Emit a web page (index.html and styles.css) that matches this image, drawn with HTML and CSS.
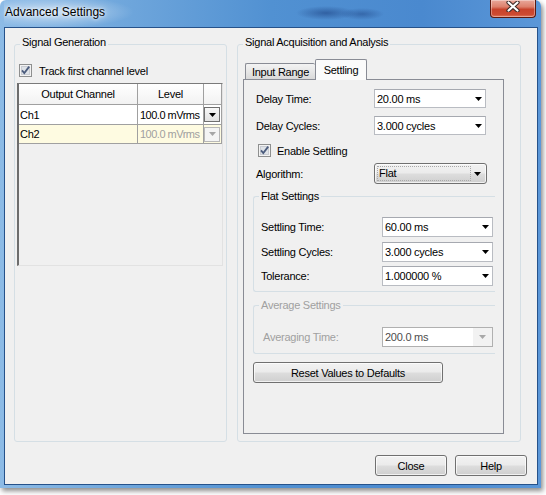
FILE: index.html
```html
<!DOCTYPE html>
<html>
<head>
<meta charset="utf-8">
<title>Advanced Settings</title>
<link rel="stylesheet" href="styles.css">
</head>
<body>
<div class="window">
  <div class="titlebar">
    <span class="title">Advanced Settings</span>
    <span class="close-x">
      <svg width="14" height="11" viewBox="0 0 14 11"><path d="M2.5 1.5 11.5 9.5M11.5 1.5 2.5 9.5" stroke="#3b2a28" stroke-width="4.2" stroke-linecap="round"/><path d="M2.5 1.5 11.5 9.5M11.5 1.5 2.5 9.5" stroke="#fff" stroke-width="2.2" stroke-linecap="round"/></svg>
    </span>
  </div>
  <div class="client">
    <div class="groups">
      <fieldset class="group gen">
        <legend class="glegend">Signal Generation</legend>
        <div class="check gen-check">
          <svg width="13" height="13" viewBox="0 0 13 13"><rect x="0.5" y="0.5" width="12" height="12" fill="#f3f3f3" stroke="#8e8f8f"/><rect x="2.5" y="2.5" width="8" height="8" fill="#dfe3e8" stroke="#c9ccd2"/><path d="M3 6.3 5.3 9 10.2 2.6" fill="none" stroke="#4b5c7d" stroke-width="1.8"/></svg>
          <span>Track first channel level</span>
        </div>
        <div class="chgrid">
          <div class="cell hd">Output Channel</div>
          <div class="cell hd">Level</div>
          <div class="cell hd"></div>
          <div class="cell">Ch1</div>
          <div class="cell lvl">100.0 mVrms</div>
          <div class="cell bc"><span class="gbtn"><svg width="7" height="4" viewBox="0 0 7 4"><path d="M0 0h7L3.5 4z"/></svg></span></div>
          <div class="cell y">Ch2</div>
          <div class="cell y lvl dis">100.0 mVrms</div>
          <div class="cell y bc"><span class="gbtn off"><svg width="7" height="4" viewBox="0 0 7 4"><path d="M0 0h7L3.5 4z" fill="#a6a6a6"/></svg></span></div>
        </div>
      </fieldset>
      <fieldset class="group acq">
        <legend class="glegend">Signal Acquisition and Analysis</legend>
        <div class="tabs">
          <span class="tab t1">Input Range</span>
          <span class="tab on">Settling</span>
        </div>
        <div class="panel">
          <div class="prow">
            <span>Delay Time:</span>
            <div class="combo"><span class="v">20.00 ms</span><svg width="7" height="4" viewBox="0 0 7 4"><path d="M0 0h7L3.5 4z"/></svg></div>
          </div>
          <div class="prow r2">
            <span>Delay Cycles:</span>
            <div class="combo"><span class="v">3.000 cycles</span><svg width="7" height="4" viewBox="0 0 7 4"><path d="M0 0h7L3.5 4z"/></svg></div>
          </div>
          <div class="check pcheck">
            <svg width="13" height="13" viewBox="0 0 13 13"><rect x="0.5" y="0.5" width="12" height="12" fill="#f3f3f3" stroke="#8e8f8f"/><rect x="2.5" y="2.5" width="8" height="8" fill="#dfe3e8" stroke="#c9ccd2"/><path d="M3 6.3 5.3 9 10.2 2.6" fill="none" stroke="#4b5c7d" stroke-width="1.8"/></svg>
            <span>Enable Settling</span>
          </div>
          <div class="prow alg">
            <span>Algorithm:</span>
            <div class="dlist"><span class="focus">Flat</span><svg width="7" height="4" viewBox="0 0 7 4"><path d="M0 0h7L3.5 4z"/></svg></div>
          </div>
          <fieldset class="sub flat">
            <legend class="slegend">Flat Settings</legend>
            <div class="srow s1">
              <span>Settling Time:</span>
              <div class="combo tall"><span class="v">60.00 ms</span><svg width="7" height="4" viewBox="0 0 7 4"><path d="M0 0h7L3.5 4z"/></svg></div>
            </div>
            <div class="srow s2">
              <span>Settling Cycles:</span>
              <div class="combo tall"><span class="v">3.000 cycles</span><svg width="7" height="4" viewBox="0 0 7 4"><path d="M0 0h7L3.5 4z"/></svg></div>
            </div>
            <div class="srow s3">
              <span>Tolerance:</span>
              <div class="combo tall"><span class="v">1.000000 %</span><svg width="7" height="4" viewBox="0 0 7 4"><path d="M0 0h7L3.5 4z"/></svg></div>
            </div>
          </fieldset>
          <fieldset class="sub avg">
            <legend class="slegend off">Average Settings</legend>
            <div class="arow">
              <span class="off">Averaging Time:</span>
              <div class="combo tall dis"><span class="v">200.0 ms</span><span class="dbtn"><svg width="7" height="4" viewBox="0 0 7 4"><path d="M0 0h7L3.5 4z" fill="#a8a8a8"/></svg></span></div>
            </div>
          </fieldset>
          <div class="btn reset">Reset Values to Defaults</div>
        </div>
      </fieldset>
    </div>
    <div class="footer">
      <div class="btn">Close</div>
      <div class="btn">Help</div>
    </div>
  </div>
</div>
</body>
</html>
```
FILE: styles.css
```css
* { box-sizing: border-box; }
html, body { margin: 0; padding: 0; }
body {
  width: 546px;
  height: 495px;
  overflow: hidden;
  background: #ffffff;
  font-family: "Liberation Sans", Arial, sans-serif;
  font-size: 11px;
  letter-spacing: -0.25px;
  color: #000;
}
.window {
  width: 541px;
  height: 488px;
  padding: 0 3px 3px 4px;
  display: flex;
  flex-direction: column;
  background: linear-gradient(to right, #8dbbe6 0%, #70a7dc 22%, #5191d2 50%, #4a89cf 78%, #5b97d8 100%);
  border-radius: 6px 6px 0 0;
  box-shadow: 2px 3px 5px rgba(0, 0, 0, 0.45);
}
.titlebar {
  height: 27px;
  display: flex;
  align-items: flex-start;
  padding-left: 1px;
  background:
    radial-gradient(ellipse 80px 16px at 50px 12px, rgba(255,255,255,0.55), rgba(255,255,255,0)),
    radial-gradient(ellipse 30px 7px at 322px 13px, rgba(25,60,125,0.55), rgba(25,60,125,0)),
    radial-gradient(ellipse 22px 6px at 358px 14px, rgba(25,60,125,0.45), rgba(25,60,125,0));
}
.title {
  margin-top: 5px;
  font-size: 12px;
  line-height: 15px;
  letter-spacing: 0;
  color: #000;
  text-shadow: 0 0 6px #fff, 0 0 3px rgba(255,255,255,0.9);
}
.close-x {
  margin-left: auto;
  margin-right: 2px;
  width: 46px;
  height: 18px;
  display: flex;
  justify-content: center;
  align-items: flex-start;
  padding-top: 1px;
  border: 1px solid #5d1a10;
  border-top: none;
  border-radius: 0 0 4px 4px;
  background: linear-gradient(#e9a89b 0%, #dd806c 40%, #c8432c 55%, #cd4a31 85%, #df785e 100%);
  box-shadow: inset 0 0 0 1px rgba(255,255,255,0.35);
}
.client {
  flex: 1;
  background: #f0f0f0;
  border: 1px solid #26528a;
  padding: 8px 10px 8px 9px;
  display: flex;
  flex-direction: column;
}
.groups {
  display: flex;
  gap: 10px;
  height: 406px;
}
.group {
  margin: 0;
  padding: 0;
  min-width: 0;
  height: 406px;
  border: 1px solid #d5dfe5;
  border-radius: 3px;
}
.glegend {
  margin-left: 5px;
  padding: 0 2px 4px;
  line-height: 13px;
}
.gen { width: 213px; }
.acq { width: 284px; }
.check {
  display: flex;
  align-items: center;
  gap: 7px;
  height: 13px;
}
.check svg { flex: none; }
.gen-check { margin: 11px 0 0 4px; }
.chgrid {
  margin: 6px 0 0 2px;
  width: 206px;
  height: 183px;
  border-style: solid;
  border-width: 1px 1px 1px 2px;
  border-color: #7a7a7a #e2e2e2 #e2e2e2 #6d6d6d;
  display: grid;
  grid-template-columns: 119px 66px 18px;
  grid-template-rows: 21px 20px 19px;
  align-content: start;
}
.cell {
  border-right: 1px solid #a0a0a0;
  border-bottom: 1px solid #a0a0a0;
  background: #fff;
  display: flex;
  align-items: center;
  white-space: nowrap;
  overflow: hidden;
  padding-left: 1px;
}
.cell.hd {
  justify-content: center;
  padding-left: 0;
  background: linear-gradient(#ffffff, #f2f2f2);
}
.cell.y { background: #fefbe1; }
.cell.lvl { padding-left: 2px; letter-spacing: -0.5px; }
.cell.dis { color: #a0a0a0; }
.cell.bc { padding: 0; }
.gbtn {
  width: 16px;
  height: 15px;
  border: 1px solid #6f6f6f;
  background: linear-gradient(#f8f8f8, #e2e2e2);
  display: flex;
  align-items: center;
  justify-content: center;
}
.gbtn.off {
  border-color: #b8b8b8;
  background: #f4f4f4;
}
.tabs {
  display: flex;
  align-items: flex-end;
  height: 20px;
  margin: 6px 0 0 7px;
}
.tab {
  height: 16px;
  border: 1px solid #898c95;
  border-bottom: none;
  border-radius: 2px 2px 0 0;
  background: linear-gradient(#f3f3f3, #e7e7e7 50%, #d9d9d9);
  display: flex;
  align-items: center;
  justify-content: center;
}
.tab.t1 { width: 70px; border-right: none; }
.tab.on {
  width: 52px;
  height: 21px;
  margin-bottom: -1px;
  background: #fbfbfb;
  position: relative;
  z-index: 1;
  padding-bottom: 1px;
}
.panel {
  margin-left: 5px;
  width: 261px;
  height: 355px;
  border: 1px solid #898c95;
  background: #f0f0f0;
  padding-top: 9px;
}
.prow {
  display: grid;
  grid-template-columns: 118px 113px;
  align-items: center;
  margin-left: 12px;
}
.prow.r2 { margin-top: 8px; }
.prow.alg { margin-top: 6px; }
.combo {
  width: 112px;
  height: 19px;
  display: flex;
  align-items: center;
  background: #fff;
  border: 1px solid #b9bcc2;
  border-top-color: #a6a9b0;
  padding-left: 2px;
}
.combo.tall { width: 111px; height: 20px; }
.combo .v { flex: 1; white-space: nowrap; }
.combo > svg { margin-right: 3px; flex: none; }
.combo.dis { border-color: #b0b0b0; color: #4d4d4d; padding-right: 0; }
.dbtn {
  width: 19px;
  height: 100%;
  background: #f2f2f2;
  display: flex;
  align-items: center;
  justify-content: center;
}
.pcheck { margin: 9px 0 0 14px; gap: 6px; }
.dlist {
  width: 113px;
  height: 21px;
  display: flex;
  align-items: center;
  padding-left: 2px;
  border: 1px solid #707070;
  border-radius: 3px;
  background: linear-gradient(#f2f2f2 0%, #ebebeb 48%, #dddddd 52%, #cfcfcf 100%);
  box-shadow: inset 0 0 0 1px rgba(255,255,255,0.7);
}
.dlist .focus {
  flex: 1;
  height: 15px;
  line-height: 13px;
  padding-left: 1px;
  margin-right: 3px;
  border: 1px dotted #a9a9a9;
}
.dlist > svg { margin-right: 5px; flex: none; }
.sub {
  margin: 6px 0 0 9px;
  padding: 0 0 5px 0;
  width: 242px;
  min-width: 0;
  border: 1px solid #d5dfe5;
  border-right: none;
  border-radius: 3px 0 0 3px;
}
.slegend {
  margin-left: 5px;
  padding: 0 2px;
  line-height: 13px;
}
.off { color: #a0a0a0; }
.srow {
  display: grid;
  grid-template-columns: 121px 111px;
  align-items: center;
  margin-left: 7px;
}
.srow.s1 { margin-top: 14px; }
.srow.s2 { margin-top: 5px; }
.srow.s3 { margin-top: 4px; }
.sub.avg { margin-top: 7px; padding-bottom: 6px; }
.arow {
  display: grid;
  grid-template-columns: 119px 111px;
  align-items: center;
  margin: 15px 0 0 9px;
}
.btn {
  width: 72px;
  height: 21px;
  display: flex;
  align-items: center;
  justify-content: center;
  border: 1px solid #707070;
  border-radius: 3px;
  background: linear-gradient(#f2f2f2 0%, #ebebeb 48%, #dddddd 52%, #cfcfcf 100%);
  box-shadow: inset 0 0 0 1px rgba(255,255,255,0.7);
}
.btn.reset {
  margin: 8px 0 0 9px;
  width: 190px;
}
.footer {
  display: flex;
  justify-content: flex-end;
  gap: 8px;
  margin-top: 13px;
}
```
